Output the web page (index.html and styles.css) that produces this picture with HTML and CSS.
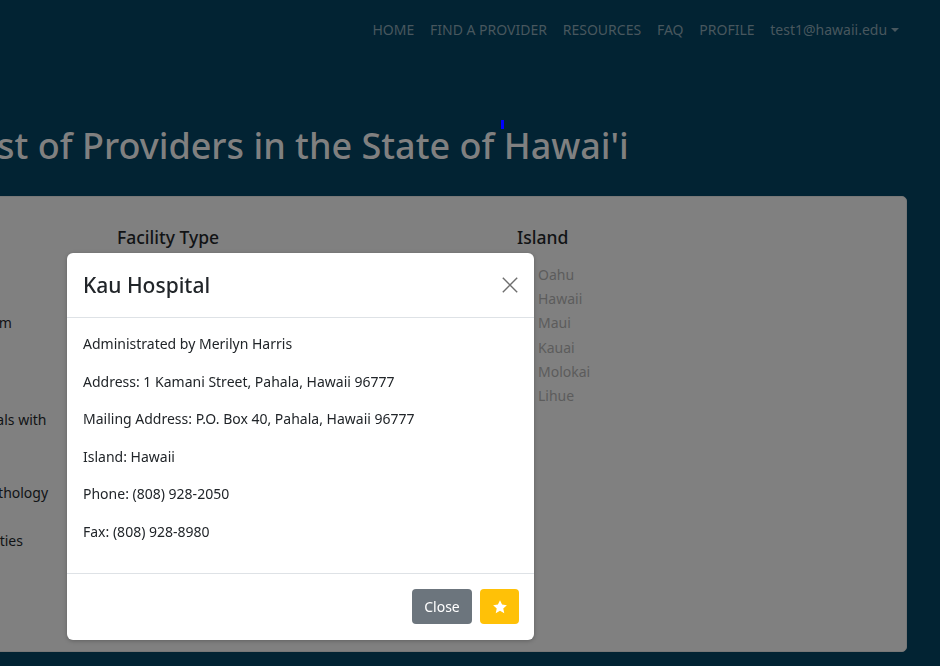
FILE: index.html
```html
<!DOCTYPE html>
<html lang="en">
<head>
<meta charset="utf-8">
<title>List of Providers</title>
<link rel="stylesheet" href="styles.css">
</head>
<body>
<nav class="topnav">
  <ul class="nav-links">
    <li><a href="#">HOME</a></li>
    <li><a href="#">FIND A PROVIDER</a></li>
    <li><a href="#">RESOURCES</a></li>
    <li><a href="#">FAQ</a></li>
    <li><a href="#">PROFILE</a></li>
    <li><a href="#" class="dropdown-toggle">test1@hawaii.edu<span class="caret"></span></a></li>
  </ul>
</nav>

<main class="page">
  <h1 class="page-title">List of Providers in the State of <span class="cursor-mark"></span>Hawai'i</h1>

  <section class="filter-card">
    <div class="filter-col">
      <h5 class="filter-title">Services</h5>
      <ul class="options dark">
        <li>Audiology</li>
        <li>Autism Services</li>
        <li>Early Intervention Home Visiting Program</li>
        <li>Occupational Therapy</li>
        <li>Physical Therapy</li>
        <li>Respite Care</li>
        <li>Services and Programs for Any Individuals with</li>
        <li>Special Needs</li>
        <li>Psychology</li>
        <li>Audiology and Speech and language Pathology</li>
        <li>Vision Services</li>
        <li>Family services for children with Disabilities</li>
      </ul>
    </div>
    <div class="filter-col">
      <h5 class="filter-title">Facility Type</h5>
      <ul class="options dark">
        <li>Hospital</li>
        <li>Clinic</li>
        <li>Community Health Center</li>
        <li>Private Practice</li>
        <li>School</li>
      </ul>
    </div>
    <div class="filter-col">
      <h5 class="filter-title">Island</h5>
      <ul class="options muted">
        <li>Oahu</li>
        <li>Hawaii</li>
        <li>Maui</li>
        <li>Kauai</li>
        <li>Molokai</li>
        <li>Lihue</li>
      </ul>
    </div>
  </section>
</main>

<div class="modal" role="dialog">
  <div class="modal-header">
    <h4 class="modal-title">Kau Hospital</h4>
    <button class="btn-close" aria-label="Close">
      <svg viewBox="0 0 16 16" width="16" height="16"><path d="M0.8 0.8 L15.2 15.2 M15.2 0.8 L0.8 15.2" stroke="currentColor" stroke-width="1.4" fill="none"/></svg>
    </button>
  </div>
  <div class="modal-body">
    <p>Administrated by Merilyn Harris</p>
    <p>Address: 1 Kamani Street, Pahala, Hawaii 96777</p>
    <p>Mailing Address: P.O. Box 40, Pahala, Hawaii 96777</p>
    <p>Island: Hawaii</p>
    <p>Phone: (808) 928-2050</p>
    <p>Fax: (808) 928-8980</p>
  </div>
  <div class="modal-footer">
    <button class="btn btn-secondary">Close</button>
    <button class="btn btn-warning" aria-label="Favorite">
      <svg viewBox="0 0 24 24" width="16" height="16"><path d="M12 1.8 L15.1 8.4 L22.3 9.2 L16.9 14.1 L18.4 21.3 L12 17.6 L5.6 21.3 L7.1 14.1 L1.7 9.2 L8.9 8.4 Z" fill="#fff"/></svg>
    </button>
  </div>
</div>
</body>
</html>
```

FILE: styles.css
```css
* { box-sizing: border-box; }

html, body {
  margin: 0;
  padding: 0;
}

body {
  width: 940px;
  height: 666px;
  overflow: hidden;
  background: #022333;
  font-family: "Noto Sans", "Open Sans", sans-serif;
  font-size: 14px;
  line-height: 22.5px;
  color: #212529;
}

.topnav {
  height: 60px;
  display: flex;
  align-items: center;
  justify-content: flex-end;
  padding-right: 33px;
}

.nav-links {
  list-style: none;
  margin: 0;
  padding: 0;
  display: flex;
}

.nav-links a {
  display: block;
  padding: 0 7.9px;
  color: #48575e;
  text-decoration: none;
  font-size: 14px;
  white-space: nowrap;
}

.caret {
  display: inline-block;
  margin-left: 4px;
  vertical-align: 3px;
  border-top: 4.5px solid #48575e;
  border-left: 4px solid transparent;
  border-right: 4px solid transparent;
}

.page {
  width: 1207px;
  margin-left: -300px;
  padding-top: 63px;
}

.page-title {
  margin: 0 0 28px;
  padding-right: 10px;
  text-align: center;
  font-size: 36px;
  line-height: 45px;
  font-weight: 500;
  color: #808080;
  white-space: nowrap;
}

.cursor-mark {
  display: inline-block;
  position: relative;
  top: -30px;
  left: -3px;
  width: 3px;
  height: 9px;
  margin-right: -3px;
  background: #0000ff;
}

.filter-card {
  height: 456px;
  background: #808080;
  border: 1px solid #777;
  border-radius: 5px;
  padding: 29px 16px 0;
  display: grid;
  grid-template-columns: repeat(3, 373px);
  column-gap: 27px;
  align-items: start;
}

.filter-title {
  margin: 0 0 14.5px;
  font-size: 17.5px;
  line-height: 22.5px;
  font-weight: 500;
  color: #111315;
}

.options {
  list-style: none;
  margin: 0;
  padding: 0 0 0 21px;
}

.options li {
  line-height: 24.2px;
  white-space: nowrap;
}

.options.dark { color: #111315; }
.options.muted { color: #5c5c5c; }

.modal {
  position: fixed;
  left: 67px;
  top: 253px;
  width: 467px;
  background: #fff;
  border-radius: 6px;
  box-shadow: 0 1px 4px rgba(0, 0, 0, 0.25);
}

.modal-header {
  height: 65px;
  display: flex;
  align-items: center;
  justify-content: space-between;
  padding: 0 15px 0 16px;
  border-bottom: 1px solid #dee2e6;
}

.modal-title {
  margin: 0;
  font-size: 21px;
  line-height: 27px;
  font-weight: 500;
  color: #212529;
}

.btn-close {
  width: 18px;
  height: 18px;
  padding: 0;
  border: 0;
  background: none;
  color: #6e6e6e;
  display: flex;
  align-items: center;
  justify-content: center;
}

.modal-body {
  padding: 15px 16px;
}

.modal-body p {
  margin: 0 0 15px;
}

.modal-footer {
  display: flex;
  justify-content: flex-end;
  align-items: center;
  gap: 8px;
  padding: 15px 15px 16px;
  border-top: 1px solid #dee2e6;
}

.btn {
  height: 35px;
  border: 0;
  border-radius: 4px;
  font-family: inherit;
  font-size: 14px;
  color: #fff;
  display: flex;
  align-items: center;
  justify-content: center;
  padding: 0;
}

.btn-secondary {
  width: 60px;
  background: #6c757d;
}

.btn-warning {
  width: 39px;
  background: #ffc107;
}
```
